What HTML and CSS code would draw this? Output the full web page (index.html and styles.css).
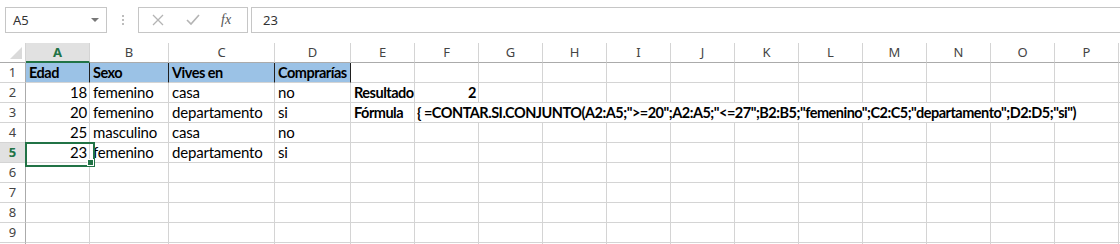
FILE: index.html
```html
<!doctype html>
<html>
<head>
    <title>Libro1 - Excel</title>

    <link rel="stylesheet" href="styles.css">
</head>
<body>
    <div class="toolbar">
      <div class="name-box">
        <span>A5</span>
        <span class="caret"></span>
      </div>

      <div class="grip">
        <span class="dot"></span>
        <span class="dot"></span>
        <span class="dot"></span>
      </div>

      <div class="fx-buttons">
        <svg class="btn-icon" width="14" height="14" viewBox="0 0 14 14">
          <path d="M2 2 L12 12 M12 2 L2 12" stroke="#b4b4b4" stroke-width="1.3" fill="none"/>
        </svg>
        <svg class="btn-icon" width="16" height="14" viewBox="0 0 16 14">
          <path d="M2 7 L6 11 L14 2" stroke="#b4b4b4" stroke-width="1.6" fill="none"/>
        </svg>
        <span class="fx">fx</span>
      </div>

      <div class="formula-input">23</div>
    </div>

    <div class="sheet">
      <div class="corner">
        <svg width="14" height="14" viewBox="0 0 14 14"><polygon points="1,13 13,13 13,1" fill="#dadada"/></svg>
      </div>
      <div class="col-head selected">A</div><div class="col-head">B</div><div class="col-head">C</div><div class="col-head">D</div>
      <div class="col-head">E</div><div class="col-head">F</div><div class="col-head">G</div><div class="col-head">H</div>
      <div class="col-head">I</div><div class="col-head">J</div><div class="col-head">K</div><div class="col-head">L</div>
      <div class="col-head">M</div><div class="col-head">N</div><div class="col-head">O</div><div class="col-head">P</div>
      <div class="col-head"></div>

      <!-- row 1 -->
      <div class="row-head">1</div>
      <div class="cell title">Edad</div><div class="cell title">Sexo</div><div class="cell title">Vives en</div><div class="cell title">Comprarías</div>
      <div class="cell"></div><div class="cell"></div><div class="cell"></div><div class="cell"></div>
      <div class="cell"></div><div class="cell"></div><div class="cell"></div><div class="cell"></div>
      <div class="cell"></div><div class="cell"></div><div class="cell"></div><div class="cell"></div>
      <div class="cell"></div>

      <!-- row 2 -->
      <div class="row-head">2</div>
      <div class="cell num">18</div><div class="cell">femenino</div><div class="cell">casa</div><div class="cell">no</div>
      <div class="cell strong">Resultado</div><div class="cell strong num">2</div><div class="cell"></div><div class="cell"></div>
      <div class="cell"></div><div class="cell"></div><div class="cell"></div><div class="cell"></div>
      <div class="cell"></div><div class="cell"></div><div class="cell"></div><div class="cell"></div>
      <div class="cell"></div>

      <!-- row 3 -->
      <div class="row-head">3</div>
      <div class="cell num">20</div><div class="cell">femenino</div><div class="cell">departamento</div><div class="cell">si</div>
      <div class="cell strong">Fórmula</div>
      <div class="cell strong formula">{ =CONTAR.SI.CONJUNTO(A2:A5;"&gt;=20";A2:A5;"&lt;=27";B2:B5;"femenino";C2:C5;"departamento";D2:D5;"si")</div>
      <div class="cell"></div>

      <!-- row 4 -->
      <div class="row-head">4</div>
      <div class="cell num">25</div><div class="cell">masculino</div><div class="cell">casa</div><div class="cell">no</div>
      <div class="cell"></div><div class="cell"></div><div class="cell"></div><div class="cell"></div>
      <div class="cell"></div><div class="cell"></div><div class="cell"></div><div class="cell"></div>
      <div class="cell"></div><div class="cell"></div><div class="cell"></div><div class="cell"></div>
      <div class="cell"></div>

      <!-- row 5 -->
      <div class="row-head selected">5</div>
      <div class="cell num active">23</div><div class="cell">femenino</div><div class="cell">departamento</div><div class="cell">si</div>
      <div class="cell"></div><div class="cell"></div><div class="cell"></div><div class="cell"></div>
      <div class="cell"></div><div class="cell"></div><div class="cell"></div><div class="cell"></div>
      <div class="cell"></div><div class="cell"></div><div class="cell"></div><div class="cell"></div>
      <div class="cell"></div>

      <!-- rows 6 - 9 -->
      <div class="row-head">6</div>
      <div class="cell"></div><div class="cell"></div><div class="cell"></div><div class="cell"></div>
      <div class="cell"></div><div class="cell"></div><div class="cell"></div><div class="cell"></div>
      <div class="cell"></div><div class="cell"></div><div class="cell"></div><div class="cell"></div>
      <div class="cell"></div><div class="cell"></div><div class="cell"></div><div class="cell"></div>
      <div class="cell"></div>

      <div class="row-head">7</div>
      <div class="cell"></div><div class="cell"></div><div class="cell"></div><div class="cell"></div>
      <div class="cell"></div><div class="cell"></div><div class="cell"></div><div class="cell"></div>
      <div class="cell"></div><div class="cell"></div><div class="cell"></div><div class="cell"></div>
      <div class="cell"></div><div class="cell"></div><div class="cell"></div><div class="cell"></div>
      <div class="cell"></div>

      <div class="row-head">8</div>
      <div class="cell"></div><div class="cell"></div><div class="cell"></div><div class="cell"></div>
      <div class="cell"></div><div class="cell"></div><div class="cell"></div><div class="cell"></div>
      <div class="cell"></div><div class="cell"></div><div class="cell"></div><div class="cell"></div>
      <div class="cell"></div><div class="cell"></div><div class="cell"></div><div class="cell"></div>
      <div class="cell"></div>

      <div class="row-head">9</div>
      <div class="cell"></div><div class="cell"></div><div class="cell"></div><div class="cell"></div>
      <div class="cell"></div><div class="cell"></div><div class="cell"></div><div class="cell"></div>
      <div class="cell"></div><div class="cell"></div><div class="cell"></div><div class="cell"></div>
      <div class="cell"></div><div class="cell"></div><div class="cell"></div><div class="cell"></div>
      <div class="cell"></div>

      <!-- next row only peeks in at the bottom edge -->
      <div class="row-head"></div>
      <div class="cell"></div><div class="cell"></div><div class="cell"></div><div class="cell"></div>
      <div class="cell"></div><div class="cell"></div><div class="cell"></div><div class="cell"></div>
      <div class="cell"></div><div class="cell"></div><div class="cell"></div><div class="cell"></div>
      <div class="cell"></div><div class="cell"></div><div class="cell"></div><div class="cell"></div>
      <div class="cell"></div>
    </div>
</body>
</html>
```

FILE: styles.css
```css
* {
  margin: 0;
  padding: 0;
  box-sizing: border-box;
}
body {
  width: 1120px;
  height: 244px;
  overflow: hidden;
  background-color: #fff;
  font-family: Lato, "Noto Sans", sans-serif;
}

/* formula bar */
.toolbar {
  display: flex;
  height: 26px;
  margin-top: 7px;
  padding-left: 5px;
  font-family: "Noto Sans", sans-serif;
  font-size: 13px;
  color: #333;
}
.name-box {
  width: 102px;
  border: 1px solid #c6c6c6;
  display: flex;
  align-items: center;
  justify-content: space-between;
  padding: 0 7px 0 7px;
}
.caret {
  border-left: 4px solid transparent;
  border-right: 4px solid transparent;
  border-top: 4px solid #777;
}
.grip {
  width: 31px;
  display: flex;
  flex-direction: column;
  align-items: center;
  justify-content: center;
  gap: 2px;
}
.dot {
  width: 2px;
  height: 2px;
  background-color: #bdbdbd;
}
.fx-buttons {
  width: 110px;
  border: 1px solid #c6c6c6;
  display: flex;
  align-items: center;
  padding-left: 12px;
}
.btn-icon {
  display: block;
}
.btn-icon + .btn-icon {
  margin-left: 20px;
}
.fx {
  margin-left: 20px;
  font-family: "Liberation Serif", serif;
  font-style: italic;
  font-size: 14px;
  color: #555;
}
.formula-input {
  flex: 1;
  margin-left: 3px;
  margin-right: -2px;
  border: 1px solid #c6c6c6;
  display: flex;
  align-items: center;
  padding-left: 11px;
}

/* grid */
.sheet {
  display: grid;
  grid-template-columns: 26px 64px 79px 106px 76px repeat(12, 64px) 1fr;
  grid-auto-rows: 20px;
  margin-top: 10px;
}
.corner {
  border-right: 1px solid #d4d4d4;
  border-bottom: 1px solid #ababab;
  display: flex;
  align-items: flex-end;
  justify-content: flex-end;
  padding: 0 2px 2px 0;
}
.corner svg {
  display: block;
}
.col-head {
  border-right: 1px solid #d4d4d4;
  border-bottom: 1px solid #ababab;
  font-family: "Noto Sans", sans-serif;
  font-size: 13px;
  line-height: 18px;
  color: #444;
  text-align: center;
}
.col-head.selected {
  background-color: #e1e1e1;
  border-bottom: 2px solid #217346;
  color: #217346;
  font-weight: bold;
}
.row-head {
  border-right: 1px solid #ababab;
  border-bottom: 1px solid #d4d4d4;
  font-family: "Noto Sans", sans-serif;
  font-size: 13px;
  line-height: 19px;
  color: #444;
  text-align: center;
}
.row-head.selected {
  background-color: #e1e1e1;
  color: #217346;
  font-weight: bold;
}
.cell {
  border-right: 1px solid #d4d4d4;
  border-bottom: 1px solid #d4d4d4;
  padding: 0 3px;
  font-size: 15px;
  line-height: 19px;
  letter-spacing: -0.2px;
  color: #000;
  white-space: nowrap;
}
.cell.title {
  background-color: #9bc2e6;
  border-right-color: #1f1f1f;
  font-weight: bold;
  font-size: 14.5px;
  letter-spacing: -0.5px;
}
.cell.title:first-of-type {
  border-left: 1px solid #1f1f1f;
}
.cell.strong {
  font-weight: bold;
  font-size: 14.5px;
  letter-spacing: -0.5px;
}
.cell.num {
  text-align: right;
  padding-right: 2px;
}
.cell.formula {
  grid-column: span 11;
  padding-left: 2px;
}
.cell.active {
  position: relative;
}
.cell.active::before {
  content: "";
  position: absolute;
  left: -1px;
  top: -1px;
  width: 66px;
  height: 21px;
  border: 2px solid #217346;
}
.cell.active::after {
  content: "";
  position: absolute;
  left: 62px;
  top: 17px;
  width: 5px;
  height: 5px;
  background-color: #217346;
  box-shadow: 0 0 0 1px #fff;
}
```
